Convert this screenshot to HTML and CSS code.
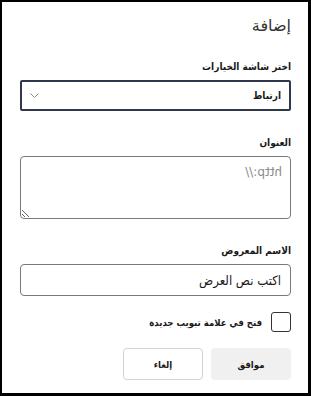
FILE: index.html
```html
<!DOCTYPE html>
<html lang="ar" dir="rtl">
<head>
    <meta charset="UTF-8">
    <meta name="viewport" content="width=device-width, initial-scale=1.0">
    <title>إضافة</title>
    <link rel="stylesheet" href="styles.css">
</head>
<body>
    <div class="dialog">
        <h2 class="dialog-title">إضافة</h2>

        <div class="field">
            <label class="field-label">اختر شاشة الخيارات</label>
            <div class="select-box">
                <span>ارتباط</span>
                <svg class="chevron" width="9" height="5" viewBox="0 0 9 5">
                    <path d="M0.5 0.5 L4.5 4.5 L8.5 0.5" fill="none" stroke="#8a8a8a" stroke-width="1"/>
                </svg>
            </div>
        </div>

        <div class="field">
            <label class="field-label" for="address">العنوان</label>
            <textarea id="address" class="url-area" dir="ltr" placeholder="http://"></textarea>
        </div>

        <div class="field">
            <label class="field-label" for="display">الاسم المعروض</label>
            <input id="display" class="text-input" type="text" placeholder="اكتب نص العرض">
        </div>

        <div class="check-row">
            <span class="check-box"></span>
            <span class="check-label">فتح في علامة تبويب جديدة</span>
        </div>

        <div class="actions">
            <button class="btn btn-ok">موافق</button>
            <button class="btn btn-cancel">إلغاء</button>
        </div>
    </div>
</body>
</html>
```

FILE: styles.css
```css
body {
    margin: 0;
    font-family: "DejaVu Sans Condensed", "DejaVu Sans", sans-serif;
    background: #fff;
    color: #1a1a1a;
}

.dialog {
    width: 311px;
    height: 396px;
    box-sizing: border-box;
    border: 2px solid #000;
    border-right-width: 3px;
    border-bottom-width: 3px;
    padding: 14px 17px 0 18px;
    direction: rtl;
}

.dialog-title {
    margin: 0 0 23px;
    font-family: "DejaVu Sans", sans-serif;
    font-size: 16px;
    line-height: 20px;
    font-weight: normal;
    color: #333;
}

.field {
    margin-bottom: 24px;
}

.field-label {
    display: block;
    font-size: 10px;
    line-height: 16px;
    font-weight: bold;
    margin-bottom: 5px;
}

.select-box {
    height: 31px;
    box-sizing: border-box;
    border: 2px solid #2f374a;
    border-radius: 2px;
    padding: 0 8px 0 8px;
    display: flex;
    align-items: center;
    justify-content: space-between;
    font-size: 10px;
    font-weight: bold;
}

.url-area {
    display: block;
    width: 100%;
    height: 63px;
    box-sizing: border-box;
    border: 1px solid #7a7a7a;
    border-radius: 4px;
    padding: 8px 8px;
    font-family: "DejaVu Sans", sans-serif;
    font-size: 12px;
    transform: scaleX(-1);
    resize: vertical;
}

.url-area::placeholder {
    color: #8a8a8a;
}

.text-input {
    display: block;
    width: 100%;
    height: 32px;
    box-sizing: border-box;
    border: 1px solid #7a7a7a;
    border-radius: 4px;
    padding: 0 9px;
    font-family: "DejaVu Sans Condensed", "DejaVu Sans", sans-serif;
    font-size: 13px;
}

.text-input::placeholder {
    color: #1a1a1a;
}

.check-row {
    display: flex;
    align-items: center;
    gap: 9px;
    margin-top: -8px;
}

.check-box {
    width: 20px;
    height: 20px;
    box-sizing: border-box;
    border: 1.5px solid #333;
    border-radius: 3px;
}

.check-label {
    font-size: 9.5px;
    font-weight: bold;
}

.actions {
    display: flex;
    gap: 8px;
    margin-top: 16px;
}

.btn {
    width: 80px;
    height: 32px;
    border-radius: 4px;
    font-family: "DejaVu Sans Condensed", "DejaVu Sans", sans-serif;
    font-size: 9.5px;
    font-weight: bold;
    color: #1a1a1a;
}

.btn-ok {
    background: #f0f0f0;
    border: none;
}

.btn-cancel {
    background: #fff;
    border: 1px solid #d2d2d2;
}
```
